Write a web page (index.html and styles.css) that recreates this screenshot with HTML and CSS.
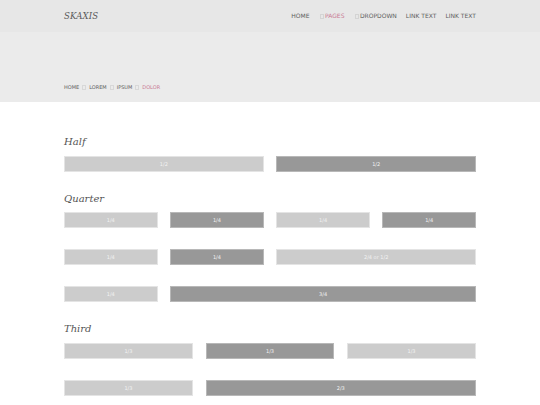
FILE: index.html
```html
<!DOCTYPE html>
<html lang="en">
<head>
<meta charset="utf-8">
<title>Skaxis</title>
<link rel="stylesheet" href="styles.css">
</head>
<body>
<header class="topbar">
  <div class="wrap topbar-inner">
    <div class="logo">SKAXIS</div>
    <nav class="nav">
      <a href="#">HOME</a>
      <a href="#" class="active"><span class="tofu"></span>PAGES</a>
      <a href="#"><span class="tofu"></span>DROPDOWN</a>
      <a href="#">LINK TEXT</a>
      <a href="#">LINK TEXT</a>
    </nav>
  </div>
</header>
<section class="hero">
  <div class="wrap">
    <ol class="crumbs">
      <li>HOME</li>
      <li class="sep"><span class="tofu"></span></li>
      <li>LOREM</li>
      <li class="sep"><span class="tofu"></span></li>
      <li>IPSUM</li>
      <li class="sep"><span class="tofu"></span></li>
      <li class="current">DOLOR</li>
    </ol>
  </div>
</section>
<main class="wrap content">
  <section class="group">
    <h2>Half</h2>
    <div class="row cols-2">
      <div class="cell light">1/2</div>
      <div class="cell dark">1/2</div>
    </div>
  </section>
  <section class="group">
    <h2>Quarter</h2>
    <div class="row cols-4">
      <div class="cell light">1/4</div>
      <div class="cell dark">1/4</div>
      <div class="cell light">1/4</div>
      <div class="cell dark">1/4</div>
    </div>
    <div class="row cols-4">
      <div class="cell light">1/4</div>
      <div class="cell dark">1/4</div>
      <div class="cell light span-2">2/4 or 1/2</div>
    </div>
    <div class="row cols-4">
      <div class="cell light">1/4</div>
      <div class="cell dark span-3">3/4</div>
    </div>
  </section>
  <section class="group">
    <h2>Third</h2>
    <div class="row cols-3">
      <div class="cell light">1/3</div>
      <div class="cell dark">1/3</div>
      <div class="cell light">1/3</div>
    </div>
    <div class="row cols-3">
      <div class="cell light">1/3</div>
      <div class="cell dark span-2">2/3</div>
    </div>
  </section>
</main>
</body>
</html>
```
FILE: styles.css
```css
html, body {
  margin: 0;
  padding: 0;
  background: #ffffff;
  font-family: "DejaVu Sans", "Liberation Sans", sans-serif;
  color: #555555;
}

.wrap {
  width: 412px;
  margin: 0 auto;
}

.topbar {
  background: #e7e7e7;
  height: 32px;
}

.topbar-inner {
  height: 32px;
  display: flex;
  align-items: center;
  justify-content: space-between;
}

.logo {
  font-family: "DejaVu Serif", "Liberation Serif", serif;
  font-style: italic;
  font-size: 8.6px;
  color: #5a5a5a;
  letter-spacing: 0.1px;
}

.nav {
  display: flex;
  gap: 9px;
  font-size: 6px;
  line-height: 8px;
}

.nav a {
  color: #5e5e5e;
  text-decoration: none;
  display: flex;
  align-items: center;
}

.nav a.active {
  color: #c97a95;
}

.tofu {
  display: inline-block;
  width: 2px;
  height: 3px;
  border: 0.5px solid #d4d4d4;
  margin: 0 1px 0 1.5px;
}

.hero {
  background: #ebebeb;
  height: 70px;
  display: flex;
  align-items: flex-end;
}

.hero .wrap {
  padding-bottom: 12px;
}

.crumbs {
  list-style: none;
  margin: 0;
  padding: 0;
  display: flex;
  align-items: center;
  gap: 3px;
  font-size: 5px;
  line-height: 6px;
  color: #5e5e5e;
}

.crumbs .sep {
  display: flex;
  align-items: center;
}

.crumbs .sep .tofu {
  margin: 0;
  border-color: #d8d8d8;
}

.crumbs .current {
  color: #c97a95;
}

.content {
  padding-top: 33px;
  padding-bottom: 20px;
}

.group {
  display: flex;
  flex-direction: column;
  gap: 21px;
  margin-bottom: 20px;
}

.group h2 {
  font-family: "DejaVu Serif", "Liberation Serif", serif;
  font-style: italic;
  font-weight: normal;
  font-size: 10px;
  line-height: 14px;
  color: #555555;
  margin: 0 0 -14.5px 0;
}

.row {
  display: grid;
  column-gap: 12.6px;
}

.cols-2 { grid-template-columns: repeat(2, 1fr); }
.cols-3 { grid-template-columns: repeat(3, 1fr); }
.cols-4 { grid-template-columns: repeat(4, 1fr); }
.span-2 { grid-column: span 2; }
.span-3 { grid-column: span 3; }

.cell {
  height: 16px;
  box-sizing: border-box;
  display: flex;
  align-items: center;
  justify-content: center;
  font-size: 5px;
  color: #f2f2f2;
  border: 1px solid #e4e4e4;
}

.cell.light {
  background: #cccccc;
}

.cell.dark {
  background: #989898;
  border-color: #b8b8b8;
}
```
